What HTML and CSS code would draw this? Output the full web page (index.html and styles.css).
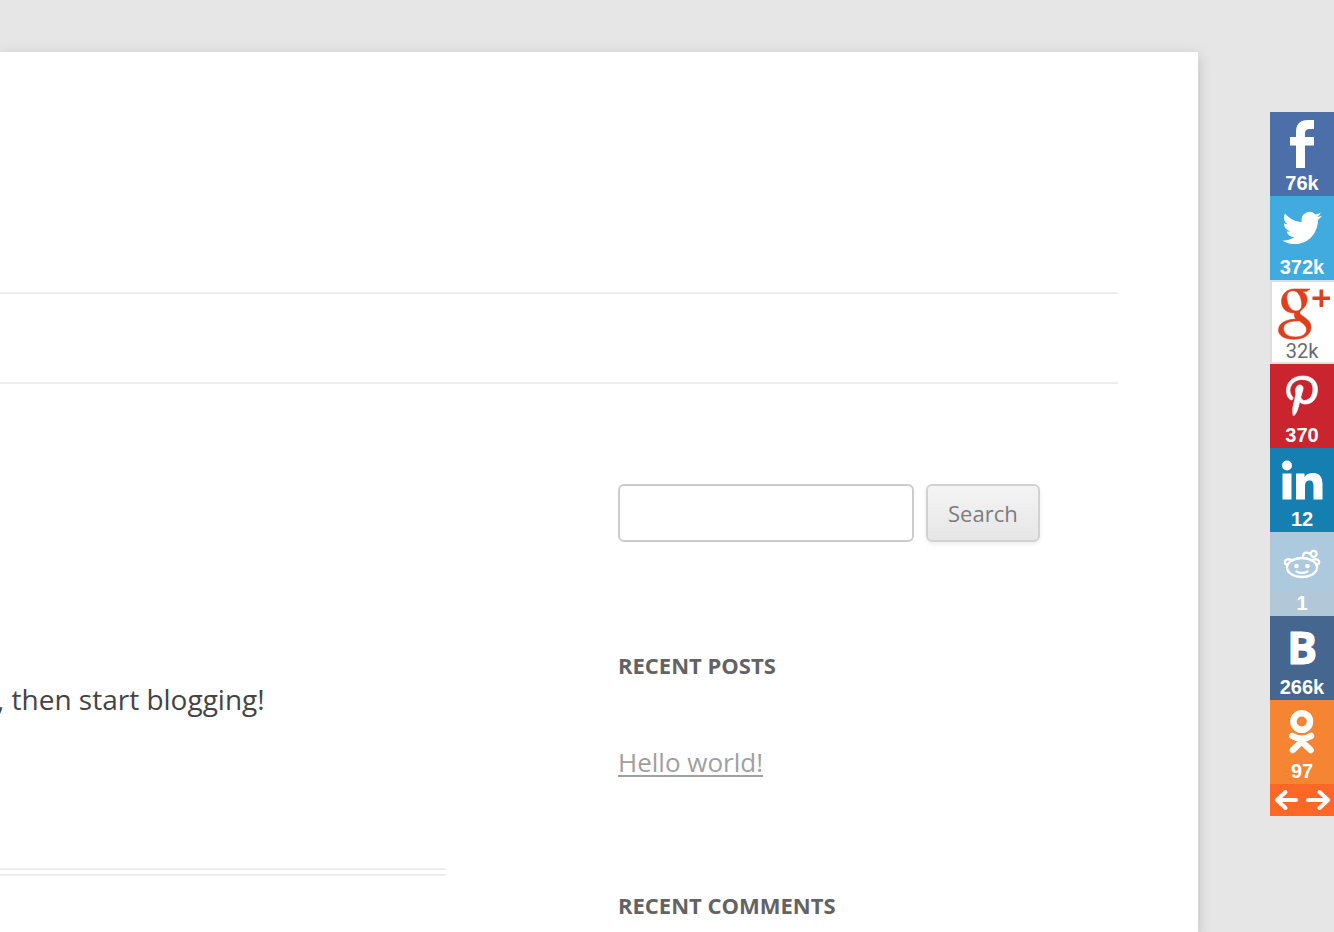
FILE: index.html
```html
<!DOCTYPE html>
<html lang="en">
<head>
<meta charset="utf-8">
<title>Blog</title>
<link rel="stylesheet" href="styles.css">
</head>
<body>
<div class="page">
  <header class="site-header"></header>
  <nav class="site-nav" aria-label="Main"></nav>
  <div class="columns">
    <main class="entry">
      <p class="entry-text">, then start blogging!</p>
      <div class="entry-rule"></div>
    </main>
    <aside class="sidebar">
      <form class="search">
        <input class="search-field" type="text" aria-label="Search for">
        <button class="search-button" type="button">Search</button>
      </form>
      <section class="widget">
        <h3 class="widget-title">RECENT POSTS</h3>
        <a class="widget-link" href="#">Hello world!</a>
      </section>
      <section class="widget">
        <h3 class="widget-title">RECENT COMMENTS</h3>
      </section>
    </aside>
  </div>
</div>

<div class="share">
  <a class="tile facebook" href="#" aria-label="Facebook 76k">
    <svg class="icon" viewBox="0 0 64 60"><path fill="#fff" d="M44 8v9h-4.500q-4.500 0-4.500 4.500v3.500h9v8.500H35V56h-9V33.500h-6V25h6V20Q26 8 38 8z"/></svg>
    <span class="count">76k</span>
  </a>
  <a class="tile twitter" href="#" aria-label="Twitter 372k">
    <svg class="icon" viewBox="0 0 64 60"><path fill="#fff" transform="translate(12.300 12.200) scale(1.650)" d="M23.953 4.570a10 10 0 01-2.825.775 4.958 4.958 0 002.163-2.723c-.951.555-2.005.959-3.127 1.184a4.920 4.920 0 00-8.384 4.482C7.690 8.095 4.067 6.130 1.640 3.162a4.822 4.822 0 00-.666 2.475c0 1.710.87 3.213 2.188 4.096a4.904 4.904 0 01-2.228-.616v.06a4.923 4.923 0 003.946 4.827 4.996 4.996 0 01-2.212.085 4.936 4.936 0 004.604 3.417 9.867 9.867 0 01-6.102 2.105c-.39 0-.779-.023-1.170-.067a13.995 13.995 0 007.557 2.209c9.053 0 13.998-7.496 13.998-13.985 0-.21 0-.42-.015-.63A9.935 9.935 0 0024 4.590z"/></svg>
    <span class="count">372k</span>
  </a>
  <a class="tile google" href="#" aria-label="Google Plus 32k">
    <svg class="icon" viewBox="0 0 64 60">
      <g fill="#df3f1d">
        <path stroke="#df3f1d" stroke-width=".6" fill-rule="evenodd" d="M24 9H40L36.500 11.500H32.500C36 13.500 37.500 17 37 21C36.500 25 34.500 27.500 32 29.500C29.500 31.500 29 33 31 34.800L36 38.500C39.500 41 41 43.500 41 47.500C41 54.500 34 59.300 23.500 59.300C14 59.300 8.500 55.500 8.500 50C8.500 43.500 15 39.500 26 39C24.500 37.500 23.800 35.500 24.800 33C16.500 33.500 11.500 28 11.500 21.500C11.500 14 17 9 24 9ZM23 10.800C18.500 10.800 16 14 17 20C18 26.500 21.500 31 26 31C30.500 31 32.500 27.500 31.500 22C30.500 15 27.500 10.800 23 10.800ZM27.500 41C18.500 41 13.500 43.500 13.500 48.500C13.500 53.500 18 57 25.500 57C32.500 57 36.500 54 36.500 49.500C36.500 46 33.500 44 29.500 41Z"/>
        <path d="M49.500 9.500h3.500V16.500h7v3.500h-7v7h-3.500v-7h-7v-3.500h7z"/>
      </g>
    </svg>
    <span class="count">32k</span>
  </a>
  <a class="tile pinterest" href="#" aria-label="Pinterest 370">
    <svg class="icon" viewBox="0 0 64 60">
      <path fill="#fff" stroke="#fff" stroke-width=".7" d="M33 12C22 12 16.500 19 16.500 26.500C16.500 31 18 34.500 21 36C22.500 36.500 23 34.500 23 33.500C20 30 19 26 21 22C23 18 27 15.500 32 15.500C39 15.500 43 19 43 25C43 31.500 39.500 36.500 34.500 36.500C32 36.500 30.500 34.500 31 32C31.800 28.500 33.500 26 33 23.500C32.500 20.500 28.500 20 26.500 23C25 25.500 25.500 28 26 30L23 43C22.500 46 22.700 49 23.200 51.500H24.200C26 49.500 27.500 46.500 28.200 43.500L29.700 37.500C31 39.500 33 40 35.500 40C43 40 47.500 33.500 47.500 25.500C47.500 17.500 42 12 33 12Z"/>
    </svg>
    <span class="count">370</span>
  </a>
  <a class="tile linkedin" href="#" aria-label="LinkedIn 12">
    <svg class="icon" viewBox="0 0 64 60">
      <g fill="#fff"><circle cx="17" cy="17.500" r="5"/><path d="M12.500 25.500h9v26h-9zM26 25.500h8.500V29C36 26.500 39 25 43 25C50 25 52.500 29.500 52.500 36.500v15H43.500V38C43.500 34.500 42.500 32.500 39.500 32.500C36 32.500 35 35 35 38.500v13H26z"/></g>
    </svg>
    <span class="count">12</span>
  </a>
  <a class="tile reddit" href="#" aria-label="Reddit 1">
    <svg class="icon" viewBox="0 0 64 60">
      <path fill="#adc9de" d="M16 0H64V48Q62 55 56 60H0V16Q2 3 16 0Z"/>
      <g fill="none" stroke="#fff" stroke-width="2.300" stroke-linecap="round">
        <ellipse cx="32" cy="35.500" rx="15" ry="9.500"/>
        <path d="M17.500 32.500C14.500 33 14 29 16.500 27.800C18.800 26.700 21.500 27.500 22 28.500M46.500 32.500C49.500 33 50 29 47.500 27.800C45.200 26.700 42.500 27.500 42 28.500M33 25.500C32.500 21 35 19.500 40 21.500M26.500 39.500Q32 42.500 37.500 39.500"/>
        <circle cx="43.700" cy="21.800" r="3"/>
      </g>
      <g fill="#fff"><circle cx="26.500" cy="34" r="2.300"/><circle cx="37.500" cy="34" r="2.300"/></g>
    </svg>
    <span class="count">1</span>
  </a>
  <a class="tile vk" href="#" aria-label="VK 266k">
    <svg class="icon" viewBox="0 0 64 60"><text class="vk-letter" x="32" y="48" text-anchor="middle">B</text></svg>
    <span class="count">266k</span>
  </a>
  <a class="tile ok" href="#" aria-label="Odnoklassniki 97">
    <svg class="icon" viewBox="0 0 64 60">
      <g fill="none" stroke="#fff" stroke-width="6.500" stroke-linecap="round" stroke-linejoin="round"><circle cx="31.700" cy="21.500" r="8.300"/><path d="M22.300 36Q31.700 41.500 41 36M22.800 50L31.700 41.500L40.600 50M31.700 40V42"/></g>
    </svg>
    <span class="count">97</span>
  </a>
  <div class="arrows">
    <button class="arrow" type="button" aria-label="Previous"><svg class="arrow-icon" viewBox="0 0 32 32"><path d="M26 16H7M15.500 8L7 16L15.500 24"/></svg></button>
    <button class="arrow" type="button" aria-label="Next"><svg class="arrow-icon" viewBox="0 0 32 32"><path d="M6 16H25.500M17.500 8L26 16L17.500 24"/></svg></button>
  </div>
</div>
</body>
</html>
```
FILE: styles.css
```css
* {
  box-sizing: border-box;
}

body {
  margin: 0;
  padding-top: 52px;
  background: #e6e6e6;
  color: #444;
  font-family: "Open Sans", "Liberation Sans", sans-serif;
}

.page {
  min-height: calc(100vh - 52px);
  margin-right: 136px;
  padding-right: 80px;
  background: #fff;
  box-shadow: 0 4px 12px rgba(64, 64, 64, 0.25);
}

.site-header {
  height: 240px;
}

.site-nav {
  height: 92px;
  border-top: 2px solid #ededed;
  border-bottom: 2px solid #ededed;
}

.columns {
  display: grid;
  grid-template-columns: 1fr 500px;
  gap: 172px;
  padding-top: 100px;
}

.entry {
  padding-top: 191px;
}

.entry-text {
  margin: 0 0 145px -3px;
  font-size: 28px;
  line-height: 48px;
}

.entry-rule {
  height: 8px;
  border-top: 2px solid #ededed;
  border-bottom: 2px solid #ededed;
}

.search {
  display: flex;
  gap: 12px;
  margin-bottom: 96px;
}

.search-field {
  width: 296px;
  height: 58px;
  padding: 12px;
  border: 2px solid #ccc;
  border-radius: 6px;
  background: #fff;
  font: 24px "Open Sans", sans-serif;
}

.search-button {
  height: 58px;
  padding: 0 20px;
  border: 2px solid #d2d2d2;
  border-radius: 6px;
  background: linear-gradient(#f4f4f4, #e6e6e6);
  box-shadow: 0 2px 4px rgba(64, 64, 64, 0.1);
  color: #7c7c7c;
  font: 22px "Open Sans", sans-serif;
}

.widget + .widget {
  margin-top: 96px;
}

.widget-title {
  margin: 0;
  color: #636363;
  font-size: 22px;
  font-weight: 700;
  line-height: 54px;
}

.widget-link {
  display: block;
  margin-top: 50px;
  color: #9f9f9f;
  font-size: 26px;
  line-height: 40px;
  text-decoration-thickness: 2px;
  text-underline-offset: 3px;
}

.share {
  position: fixed;
  top: 112px;
  right: 0;
  width: 64px;
}

.tile {
  display: block;
  height: 84px;
  color: #fff;
  font-family: "Liberation Sans", sans-serif;
  font-size: 20px;
  font-weight: 700;
  line-height: 22px;
  text-align: center;
  text-decoration: none;
}

.icon {
  display: block;
  width: 64px;
  height: 60px;
}

.count {
  display: block;
}

.facebook { background: #4c6ea9; }
.twitter { background: #41aade; }
.google {
  background: #fff;
  box-shadow: inset 2px 2px #dedede, inset 0 -2px #dedede;
  color: #6b6b6b;
  font-family: Roboto, sans-serif;
  font-weight: 400;
}
.pinterest { background: #ca242f; }
.linkedin { background: #147fb0; }
.reddit { background: #b2c7d8; }
.vk { background: #45668e; }
.ok { background: #f58433; }

.vk-letter {
  fill: #fff;
  stroke: #fff;
  stroke-width: 1px;
  font: 700 45px "Open Sans", sans-serif;
}

.arrows {
  display: flex;
  height: 32px;
  background: #ff6727;
}

.arrow {
  flex: 1;
  padding: 0;
  border: 0;
  background: none;
}

.arrow-icon {
  display: block;
  width: 32px;
  height: 32px;
  fill: none;
  stroke: #fff;
  stroke-width: 4;
  stroke-linecap: round;
  stroke-linejoin: round;
}
```
